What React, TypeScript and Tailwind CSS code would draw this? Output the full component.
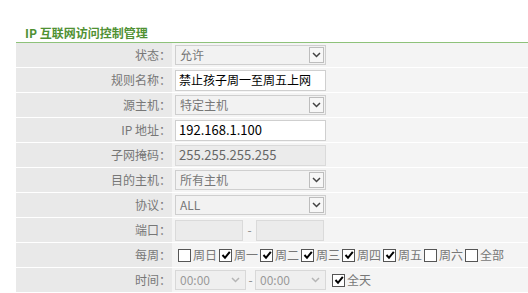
import React from "react";

const font = { fontFamily: '"Noto Sans CJK SC", "Noto Sans", sans-serif' };

function Chevron({ light }: { light?: boolean }) {
  return (
    <svg width="9" height="6" viewBox="0 0 9 6">
      <polyline
        points="1,1 4.5,4.5 8,1"
        fill="none"
        stroke={light ? "#b5b5b5" : "#444"}
        strokeWidth="1.5"
      />
    </svg>
  );
}

function Select({ value }: { value: string }) {
  return (
    <div className="flex items-center justify-between w-[151px] h-[20px] border border-[#cfcfcf] bg-[#f2f2f2] pl-[4px] pr-[1px]">
      <span className="text-[12px] text-[#777] leading-none">{value}</span>
      <span className="flex items-center justify-center w-[15px] h-[16px] border border-[#bdbdbd] bg-[#f7f7f7]">
        <Chevron />
      </span>
    </div>
  );
}

function TimeSelect() {
  return (
    <div className="flex items-center justify-between w-[71px] h-[20px] border border-[#d8d8d8] bg-[#efefef] pl-[4px] pr-[5px]">
      <span className="text-[12px] text-[#9a9a9a] leading-none">00:00</span>
      <Chevron light />
    </div>
  );
}

function Check({ on, label }: { on: boolean; label: string }) {
  return (
    <div className="flex items-center mr-[2px]">
      <span className="flex items-center justify-center w-[13px] h-[13px] border border-[#555] bg-white">
        {on && (
          <svg width="10" height="10" viewBox="0 0 10 10">
            <polyline points="1.5,5 4,7.8 8.8,1.8" fill="none" stroke="#000" strokeWidth="2" />
          </svg>
        )}
      </span>
      <span className="ml-[2px] text-[12px] text-[#777] leading-none">{label}</span>
    </div>
  );
}

function Row({ label, children }: { label: string; children: React.ReactNode }) {
  return (
    <div className="flex h-[25px] border-b border-white">
      <div className="w-[156px] bg-[#e9e9e9] flex items-center justify-end pr-[1px] text-[12px] text-[#777]">
        {label}
      </div>
      <div className="flex-1 bg-[#f4f4f4] flex items-center pl-[3px]">{children}</div>
    </div>
  );
}

const days: [string, boolean][] = [
  ["周日", false],
  ["周一", true],
  ["周二", true],
  ["周三", true],
  ["周四", true],
  ["周五", true],
  ["周六", false],
  ["全部", false],
];

export default function App() {
  return (
    <div className="w-[528px] h-[293px] bg-white overflow-hidden" style={font}>
      <div className="h-[42px] pl-[25px] pt-[27px] text-[12px] font-bold text-[#4f9133] leading-none">
        IP 互联网访问控制管理
      </div>
      <div className="ml-[16px] border-t border-[#8ec27a]">
        <Row label="状态：">
          <Select value="允许" />
        </Row>
        <Row label="规则名称：">
          <div className="w-[151px] h-[21px] border border-[#cfcfcf] bg-white pl-[3px] flex items-center text-[12px] text-black">
            禁止孩子周一至周五上网
          </div>
        </Row>
        <Row label="源主机：">
          <Select value="特定主机" />
        </Row>
        <Row label="IP 地址：">
          <div className="w-[151px] h-[21px] border border-[#cfcfcf] bg-white pl-[3px] flex items-center text-[13px] text-black">
            192.168.1.100
          </div>
        </Row>
        <Row label="子网掩码：">
          <div className="w-[151px] h-[21px] border border-[#dadada] bg-[#ebebeb] pl-[3px] flex items-center text-[13px] text-[#666]">
            255.255.255.255
          </div>
        </Row>
        <Row label="目的主机：">
          <Select value="所有主机" />
        </Row>
        <Row label="协议：">
          <Select value="ALL" />
        </Row>
        <Row label="端口：">
          <div className="w-[68px] h-[21px] border border-[#dadada] bg-[#ebebeb]" />
          <span className="w-[13px] text-center text-[12px] text-[#888]">-</span>
          <div className="w-[68px] h-[21px] border border-[#dadada] bg-[#ebebeb]" />
        </Row>
        <Row label="每周：">
          <div className="flex items-center pl-[3px]">
            {days.map(([d, on]) => (
              <Check key={d} on={on} label={d} />
            ))}
          </div>
        </Row>
        <Row label="时间：">
          <TimeSelect />
          <span className="w-[9px] text-center text-[12px] text-[#888]">-</span>
          <TimeSelect />
          <div className="ml-[6px]">
            <Check on label="全天" />
          </div>
        </Row>
      </div>
    </div>
  );
}
